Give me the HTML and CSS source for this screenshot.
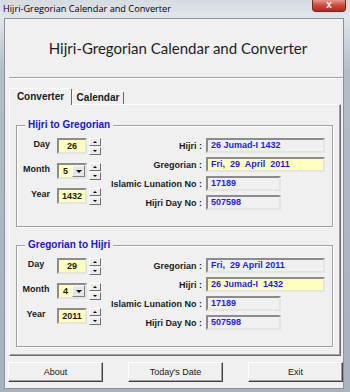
FILE: index.html
```html
<!DOCTYPE html>
<html lang="en">
<head>
  <meta charset="UTF-8">
  <meta name="viewport" content="width=device-width, initial-scale=1.0">
  <title>Hijri-Gregorian Calendar and Converter</title>
  <link rel="stylesheet" href="styles.css">
</head>
<body>
  <div class="window">
    <div class="titlebar">
      <span class="title">Hijri-Gregorian Calendar and Converter</span>
      <span class="close">x</span>
    </div>

    <div class="client">
      <h1 class="heading">Hijri-Gregorian Calendar and Converter</h1>
      <div class="separator"></div>

      <div class="tabs">
        <div class="tab active">Converter</div>
        <div class="tab">Calendar</div>
      </div>

      <div class="panel">
        <div class="group">
          <div class="legend">Hijri to Gregorian</div>
          <div class="group-body">
            <div class="date-fields">
              <div class="field">
                <label>Day</label>
                <div class="input">26</div>
                <div class="spin"><span class="up"></span><span class="down"></span></div>
              </div>
              <div class="field">
                <label>Month</label>
                <div class="input combo"><span>5</span><span class="drop"></span></div>
                <div class="spin"><span class="up"></span><span class="down"></span></div>
              </div>
              <div class="field">
                <label>Year</label>
                <div class="input">1432</div>
                <div class="spin"><span class="up"></span><span class="down"></span></div>
              </div>
            </div>
            <div class="results">
              <span class="res-label">Hijri :</span>
              <div class="value">26 Jumad-I 1432</div>
              <span class="res-label">Gregorian :</span>
              <div class="value hl">Fri,  29  April  2011</div>
              <span class="res-label">Islamic Lunation No :</span>
              <div class="value short">17189</div>
              <span class="res-label">Hijri Day No :</span>
              <div class="value short">507598</div>
            </div>
          </div>
        </div>

        <div class="group second">
          <div class="legend">Gregorian to Hijri</div>
          <div class="group-body">
            <div class="date-fields">
              <div class="field">
                <label>Day</label>
                <div class="input">29</div>
                <div class="spin"><span class="up"></span><span class="down"></span></div>
              </div>
              <div class="field">
                <label>Month</label>
                <div class="input combo"><span>4</span><span class="drop"></span></div>
                <div class="spin"><span class="up"></span><span class="down"></span></div>
              </div>
              <div class="field">
                <label>Year</label>
                <div class="input">2011</div>
                <div class="spin"><span class="up"></span><span class="down"></span></div>
              </div>
            </div>
            <div class="results">
              <span class="res-label">Gregorian :</span>
              <div class="value">Fri,  29 April 2011</div>
              <span class="res-label">Hijri :</span>
              <div class="value hl">26 Jumad-I  1432</div>
              <span class="res-label">Islamic Lunation No :</span>
              <div class="value short">17189</div>
              <span class="res-label">Hijri Day No :</span>
              <div class="value short">507598</div>
            </div>
          </div>
        </div>
      </div>

      <div class="actions">
        <button>About</button>
        <button>Today's Date</button>
        <button>Exit</button>
      </div>
    </div>
  </div>
</body>
</html>
```

FILE: styles.css
```css
* {
  box-sizing: border-box;
}
body {
  margin: 0;
  width: 350px;
  height: 392px;
  overflow: hidden;
  background: linear-gradient(#d6dbe1 0, #e2e6ea 18px, #b3bcc7 70px, #a7b2bf 100%);
  font-family: "Liberation Sans", Arial, sans-serif;
  color: #1a1a1a;
}
.titlebar {
  height: 18px;
  display: flex;
  justify-content: space-between;
  align-items: flex-start;
}
.title {
  font-family: "Open Sans", sans-serif;
  font-size: 9.2px;
  line-height: 14px;
  padding: 2px 0 0 3px;
  color: #000;
}
.close {
  width: 34px;
  height: 12px;
  margin-right: 4px;
  background: linear-gradient(#e39a90, #cb4a3c 50%, #b3291c);
  border: 1px solid #7a2a22;
  border-top: none;
  border-radius: 0 0 4px 4px;
  color: #fff;
  font-weight: bold;
  font-size: 10px;
  line-height: 10px;
  text-align: center;
}
.client {
  width: 340px;
  height: 371px;
  margin-left: 4px;
  padding: 0 0 6px 4px;
  background: #f0f0f0;
  border: 1px solid #8a939d;
}
.heading {
  margin: 0;
  height: 58px;
  display: flex;
  align-items: center;
  justify-content: center;
  padding-left: 4px;
  font-family: Lato, sans-serif;
  font-weight: normal;
  font-size: 15px;
  color: #1e1e1e;
}
.separator {
  height: 2px;
  border-top: 1px solid #a0a0a0;
  border-bottom: 1px solid #fff;
}
.tabs {
  display: flex;
  align-items: flex-end;
  height: 16px;
  margin-top: 9px;
  position: relative;
  z-index: 1;
}
.tab {
  width: 52px;
  height: 13px;
  border: 1px solid;
  border-color: #fff #696969 transparent #fff;
  border-bottom: none;
  border-radius: 2px 2px 0 0;
  font-weight: bold;
  font-size: 10px;
  line-height: 12px;
  text-align: center;
  background: #f0f0f0;
}
.tab.active {
  width: 63px;
  height: 17px;
  margin-bottom: -1px;
  line-height: 15px;
}
.panel {
  width: 332px;
  height: 252px;
  padding: 20px 7px 0 6px;
  border: 1px solid;
  border-color: #fff #696969 #696969 #fff;
  box-shadow: inset -1px -1px 0 #a0a0a0;
}
.group {
  height: 102px;
  border: 1px solid #a0a0a0;
  box-shadow: inset 1px 1px 0 #fff, 1px 1px 0 #fff;
}
.group.second {
  margin-top: 18px;
}
.legend {
  width: fit-content;
  margin: -7px 0 0 8px;
  padding: 0 3px;
  background: #f0f0f0;
  color: #1616c8;
  font-weight: bold;
  font-size: 10px;
  line-height: 12px;
}
.group-body {
  display: flex;
  padding: 7px 0 0 5px;
}
.date-fields {
  width: 79px;
  display: flex;
  flex-direction: column;
  gap: 9px;
}
.field {
  display: flex;
  height: 16px;
}
.field label {
  width: 28px;
  margin-right: 7px;
  text-align: right;
  font-weight: bold;
  font-size: 9px;
  line-height: 12px;
}
.second .field label {
  text-align: center;
}
.input {
  width: 30px;
  height: 16px;
  border: 2px solid;
  border-color: #8c8c8c #e4e4e4 #e4e4e4 #8c8c8c;
  background: #ffffc0;
  font-weight: bold;
  font-size: 9px;
  line-height: 12px;
  text-align: center;
}
.combo {
  display: flex;
  justify-content: space-between;
  padding-left: 4px;
  text-align: left;
}
.drop {
  width: 13px;
  height: 12px;
  background: #e6e6e6;
  border: 1px solid;
  border-color: #fff #808080 #808080 #fff;
  display: flex;
  align-items: center;
  justify-content: center;
}
.drop::after {
  content: "";
  border-left: 3px solid transparent;
  border-right: 3px solid transparent;
  border-top: 3px solid #000;
}
.spin {
  width: 12px;
  height: 17px;
  margin-left: 2px;
  display: flex;
  flex-direction: column;
  gap: 1px;
}
.spin span {
  height: 8px;
  background: #ececec;
  border: 1px solid;
  border-color: #fff #707070 #707070 #fff;
  display: flex;
  align-items: center;
  justify-content: center;
}
.spin .up::after {
  content: "";
  border-left: 2px solid transparent;
  border-right: 2px solid transparent;
  border-bottom: 2px solid #000;
}
.spin .down::after {
  content: "";
  border-left: 2px solid transparent;
  border-right: 2px solid transparent;
  border-top: 2px solid #000;
}
.results {
  display: grid;
  grid-template-columns: 97px auto;
  grid-auto-rows: 15px;
  column-gap: 4px;
  row-gap: 4px;
  margin-left: 4px;
  align-items: center;
}
.res-label {
  text-align: right;
  font-weight: bold;
  font-size: 9px;
  white-space: nowrap;
}
.value {
  width: 119px;
  height: 15px;
  padding-left: 3px;
  border: 2px solid;
  border-color: #8c8c8c #e4e4e4 #e4e4e4 #8c8c8c;
  background: #f0f0f0;
  color: #1c1cf0;
  font-weight: bold;
  font-size: 9px;
  line-height: 11px;
  white-space: pre;
}
.value.hl {
  background: #ffffc0;
}
.value.short {
  width: 75px;
}
.actions {
  display: flex;
  justify-content: space-between;
  margin: 6px 0 0 -1px;
}
.actions button {
  width: 95px;
  height: 20px;
  padding: 0;
  background: #f0f0f0;
  border: 1px solid;
  border-color: #fff #404040 #404040 #fff;
  box-shadow: inset -1px -1px 0 #a0a0a0;
  font-family: "Liberation Sans", Arial, sans-serif;
  font-size: 9px;
  color: #1a1a1a;
}
```
